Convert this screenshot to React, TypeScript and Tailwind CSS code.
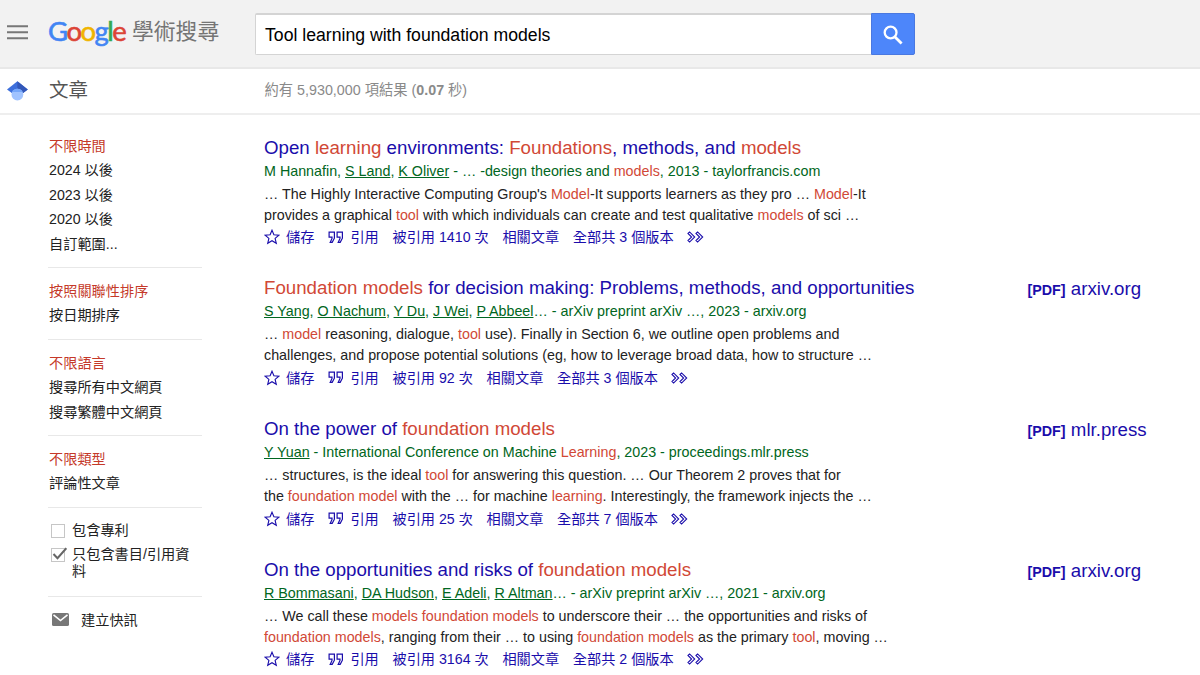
import type { ReactNode } from 'react'

type Result = {
  title: string
  meta: string
  lines: string[]
  cited: number
  versions: number
  pdf?: string
}

// *text* is a highlighted query term, _text_ is an underlined author link
const results: Result[] = [
  {
    title: 'Open *learning* environments: *Foundations*, methods, and *models*',
    meta: 'M Hannafin, _S Land_, _K Oliver_ - … -design theories and *models*, 2013 - taylorfrancis.com',
    lines: [
      "… The Highly Interactive Computing Group's *Model*-It supports learners as they pro … *Model*-It",
      'provides a graphical *tool* with which individuals can create and test qualitative *models* of sci …',
    ],
    cited: 1410,
    versions: 3,
  },
  {
    title: '*Foundation models* for decision making: Problems, methods, and opportunities',
    meta: '_S Yang_, _O Nachum_, _Y Du_, _J Wei_, _P Abbeel_… - arXiv preprint arXiv …, 2023 - arxiv.org',
    lines: [
      '… *model* reasoning, dialogue, *tool* use). Finally in Section 6, we outline open problems and',
      'challenges, and propose potential solutions (eg, how to leverage broad data, how to structure …',
    ],
    cited: 92,
    versions: 3,
    pdf: 'arxiv.org',
  },
  {
    title: 'On the power of *foundation models*',
    meta: '_Y Yuan_ - International Conference on Machine *Learning*, 2023 - proceedings.mlr.press',
    lines: [
      '… structures, is the ideal *tool* for answering this question. … Our Theorem 2 proves that for',
      'the *foundation model* with the … for machine *learning*. Interestingly, the framework injects the …',
    ],
    cited: 25,
    versions: 7,
    pdf: 'mlr.press',
  },
  {
    title: 'On the opportunities and risks of *foundation models*',
    meta: '_R Bommasani_, _DA Hudson_, _E Adeli_, _R Altman_… - arXiv preprint arXiv …, 2021 - arxiv.org',
    lines: [
      '… We call these *models foundation models* to underscore their … the opportunities and risks of',
      '*foundation models*, ranging from their … to using *foundation models* as the primary *tool*, moving …',
    ],
    cited: 3164,
    versions: 2,
    pdf: 'arxiv.org',
  },
]

const filters = [
  ['不限時間', '2024 以後', '2023 以後', '2020 以後', '自訂範圍...'],
  ['按照關聯性排序', '按日期排序'],
  ['不限語言', '搜尋所有中文網頁', '搜尋繁體中文網頁'],
  ['不限類型', '評論性文章'],
]

function Rich({ text }: { text: string }) {
  return (
    <>
      {text.split(/(\*[^*]+\*|_[^_]+_)/).map((part, i) => {
        if (part.startsWith('*')) return <span key={i} className="text-[#d14836]">{part.slice(1, -1)}</span>
        if (part.startsWith('_')) return <a key={i} className="underline underline-offset-1">{part.slice(1, -1)}</a>
        return part
      })}
    </>
  )
}

function Section({ children }: { children: ReactNode }) {
  return <div className="border-b border-[#e8e8e8] py-[10.9px]">{children}</div>
}

function Header() {
  return (
    <header className="flex h-[69px] items-start border-b-2 border-[#e8e8e8] bg-[#f2f2f2]">
      <svg className="ml-[7px] mt-[25px] h-[15px] w-[21px]" viewBox="0 0 21 15">
        <path d="M0 1.2h21M0 7.2h21M0 13.2h21" stroke="#777" strokeWidth="2" />
      </svg>
      <div className="ml-[20px] mt-[14px] flex w-[207px] items-center whitespace-nowrap">
        <span className="-mt-[2px] w-[84px] font-['Lato'] text-[27.5px] leading-[36px] tracking-[-1.55px] [-webkit-text-stroke:0.6px]">
          <span className="text-[#4285f4]">G</span>
          <span className="text-[#dc4437]">o</span>
          <span className="text-[#f0b400]">o</span>
          <span className="text-[#4285f4]">g</span>
          <span className="text-[#34a853]">l</span>
          <span className="text-[#dc4437]">e</span>
        </span>
        <span className="text-[21.8px] leading-[36px] text-[#757575]">學術搜尋</span>
      </div>
      <div className="mt-[13px] flex h-[42px] w-[660px]">
        <div className="flex flex-1 items-center rounded-l-[2px] border border-t-2 border-r-0 border-[#d4d4d4] bg-white pl-[9px] pt-[2px] text-[17.65px] text-black">
          Tool learning with foundation models
        </div>
        <button className="flex w-[44px] items-center justify-center rounded-r-[2px] border border-[#4a78e0] bg-[#4d86fa] pt-px">
          <svg className="h-[20px] w-[20px]" viewBox="0 0 20 20" fill="none" stroke="#fff">
            <circle cx="7.6" cy="7.5" r="5.9" strokeWidth="2.3" />
            <path d="M12 12l6.6 6.6" strokeWidth="2.8" />
          </svg>
        </button>
      </div>
    </header>
  )
}

function SubHeader() {
  return (
    <div className="flex h-[46px] items-center border-b-2 border-[#eee]">
      <svg className="ml-[7px] h-[20px] w-[21px]" viewBox="0 0 21 20">
        <path d="M10.4 0.3L20.8 8.4l-5.7 4.3H5.8L0 8.4z" fill="#3d6fdc" />
        <path d="M10.4 0.3L20.8 8.4l-5.7 4.3-4.7-4.5z" fill="#3257b8" />
        <circle cx="10.4" cy="13.6" r="5.9" fill="#a0c3ff" />
        <path d="M5.1 11a5.9 5.9 0 0 1 10.6 0z" fill="#76a7fa" />
      </svg>
      <h1 className="ml-[21px] w-[215.5px] text-[19.5px] text-[#555]">文章</h1>
      <p className="text-[14.3px] text-[#8a8a8a]">
        約有 5,930,000 項結果 (<b>0.07</b> 秒)
      </p>
    </div>
  )
}

function Sidebar() {
  return (
    <aside className="ml-[48px] w-[154px] pt-[8px] text-[14.2px] leading-[24.45px] text-[#222]">
      {filters.map((group) => (
        <Section key={group[0]}>
          {group.map((item, i) => (
            <div key={item} className={i === 0 ? 'pl-px text-[#c53929]' : 'pl-px'}>
              {item}
            </div>
          ))}
        </Section>
      ))}
      <Section>
        <div className="flex items-center gap-[7px] pl-[3px]">
          <span className="h-[14px] w-[14px] border border-[#c6c6c6]" />
          包含專利
        </div>
        <div className="flex items-start gap-[5px] pl-[3px] pt-[3px] pb-[4px]">
          <svg className="h-[17px] w-[16px] shrink-0" viewBox="0 0 16 17">
            <rect x="0.5" y="2.5" width="13" height="13" fill="#fff" stroke="#c6c6c6" />
            <path d="M2.5 8l4 4.2L15.3 2.2" fill="none" stroke="#666" strokeWidth="2" />
          </svg>
          <span className="leading-[17.4px]">只包含書目/引用資料</span>
        </div>
      </Section>
      <div className="flex items-center gap-[12px] pl-[4px] pt-[10.9px]">
        <svg className="h-[13px] w-[17px]" viewBox="0 0 17 13">
          <rect width="17" height="13" rx="1.6" fill="#777" />
          <path d="M1.5 1.8l7 5.7 7-5.7" fill="none" stroke="#fff" strokeWidth="1.6" />
        </svg>
        建立快訊
      </div>
    </aside>
  )
}

function ResultItem({ item }: { item: Result }) {
  return (
    <article className="flex h-[140.7px] whitespace-nowrap">
      <div className="w-[763.5px]">
        <h3 className="text-[18.7px] leading-[24px] text-[#1a0dab]">
          <Rich text={item.title} />
        </h3>
        <div className="text-[14.3px] leading-[22px] text-[#006621]">
          <Rich text={item.meta} />
        </div>
        <div className="pt-[2px] text-[14.31px] leading-[21px] text-[#222]">
          {item.lines.map((line) => (
            <div key={line}>
              <Rich text={line} />
            </div>
          ))}
        </div>
        <div className="-mt-[0.3px] flex items-center text-[14.2px] leading-[24px] text-[#1a0dab]">
          <svg className="mr-[6px] h-[16px] w-[16px]" viewBox="0 0 16 16">
            <path d="M8 1.2l1.9 4.6 5 .4-3.8 3.2 1.2 4.9L8 11.7l-4.3 2.6 1.2-4.9L1.1 6.2l5-.4z" fill="none" stroke="#1a0dab" strokeWidth="1.1" />
          </svg>
          <span className="mr-[14px]">儲存</span>
          <svg className="mr-[6px] h-[13px] w-[16px]" viewBox="0 0 16 13" fill="none" stroke="#1a0dab" strokeWidth="1.2">
            <path d="M6.4 1.1H1.1v5.1h2.9v1.2L2.2 11.4h2l2.2-4.2z" />
            <path d="M14.4 1.1H9.1v5.1H12v1.2l-1.8 4h2l2.2-4.2z" />
          </svg>
          <span className="mr-[13.7px]">引用</span>
          <span className="mr-[13.7px]">被引用 {item.cited} 次</span>
          <span className="mr-[13.7px]">相關文章</span>
          <span className="mr-[13.5px]">全部共 {item.versions} 個版本</span>
          <svg className="h-[12px] w-[17px]" viewBox="0 0 17 12" fill="none" stroke="#1a0dab" strokeWidth="1.1">
            <path d="M1 2.4L2.6.9 7.7 6l-5.1 5.1L1 9.6 4.6 6z" />
            <path d="M9 2.4L10.6.9 15.7 6l-5.1 5.1L9 9.6 12.6 6z" />
          </svg>
        </div>
      </div>
      {item.pdf && (
        <a className="pt-[1px] text-[18.7px] leading-[24px] text-[#1a0dab]">
          <b className="text-[14.3px]">[PDF]</b> {item.pdf}
        </a>
      )}
    </article>
  )
}

export default function App() {
  return (
    <div className="h-[675px] w-[1200px] overflow-hidden bg-white font-['Liberation_Sans','Noto_Sans_CJK_TC',sans-serif]">
      <Header />
      <SubHeader />
      <div className="flex">
        <Sidebar />
        <main className="ml-[62px] pt-[20.5px]">
          {results.map((item) => (
            <ResultItem key={item.title} item={item} />
          ))}
        </main>
      </div>
    </div>
  )
}
